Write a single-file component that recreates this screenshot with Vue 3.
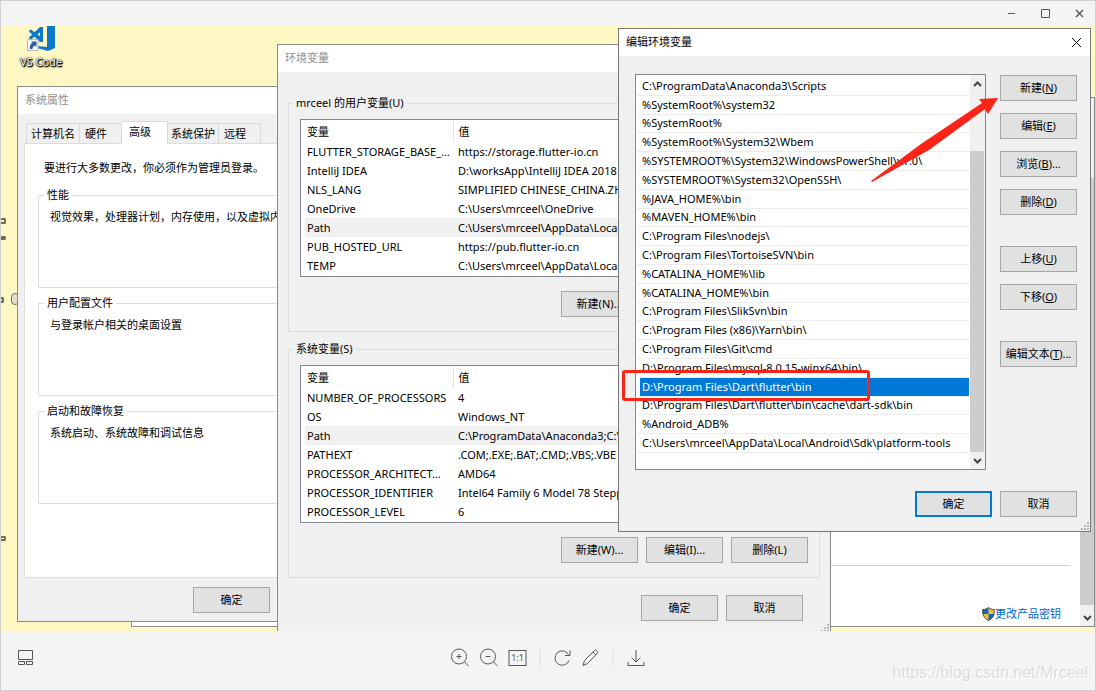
<script setup>
const userVars = [
  ['FLUTTER_STORAGE_BASE_URL', 'https://storage.flutter-io.cn'],
  ['IntelliJ IDEA', 'D:\\worksApp\\IntelliJ IDEA 2018'],
  ['NLS_LANG', 'SIMPLIFIED CHINESE_CHINA.ZHS'],
  ['OneDrive', 'C:\\Users\\mrceel\\OneDrive'],
  ['Path', 'C:\\Users\\mrceel\\AppData\\Local'],
  ['PUB_HOSTED_URL', 'https://pub.flutter-io.cn'],
  ['TEMP', 'C:\\Users\\mrceel\\AppData\\Local'],
]
const systemVars = [
  ['NUMBER_OF_PROCESSORS', '4'],
  ['OS', 'Windows_NT'],
  ['Path', 'C:\\ProgramData\\Anaconda3;C:\\'],
  ['PATHEXT', '.COM;.EXE;.BAT;.CMD;.VBS;.VBE'],
  ['PROCESSOR_ARCHITECT...', 'AMD64'],
  ['PROCESSOR_IDENTIFIER', 'Intel64 Family 6 Model 78 Stepping'],
  ['PROCESSOR_LEVEL', '6'],
]
const groups = [
  { title: 'mrceel 的用户变量(U)', rows: userVars, buttons: ['新建(N)...', '编辑(E)...', '删除(D)'] },
  { title: '系统变量(S)', rows: systemVars, buttons: ['新建(W)...', '编辑(I)...', '删除(L)'] },
]
const paths = [
  'C:\\ProgramData\\Anaconda3\\Scripts',
  '%SystemRoot%\\system32',
  '%SystemRoot%',
  '%SystemRoot%\\System32\\Wbem',
  '%SYSTEMROOT%\\System32\\WindowsPowerShell\\v1.0\\',
  '%SYSTEMROOT%\\System32\\OpenSSH\\',
  '%JAVA_HOME%\\bin',
  '%MAVEN_HOME%\\bin',
  'C:\\Program Files\\nodejs\\',
  'C:\\Program Files\\TortoiseSVN\\bin',
  '%CATALINA_HOME%\\lib',
  '%CATALINA_HOME%\\bin',
  'C:\\Program Files\\SlikSvn\\bin',
  'C:\\Program Files (x86)\\Yarn\\bin\\',
  'C:\\Program Files\\Git\\cmd',
  'D:\\Program Files\\mysql-8.0.15-winx64\\bin\\',
  'D:\\Program Files\\Dart\\flutter\\bin',
  'D:\\Program Files\\Dart\\flutter\\bin\\cache\\dart-sdk\\bin',
  '%Android_ADB%',
  'C:\\Users\\mrceel\\AppData\\Local\\Android\\Sdk\\platform-tools',
]
const selected = 16
const actions = [
  { text: '新建', key: 'N', tail: ')' },
  { text: '编辑', key: 'E', tail: ')' },
  { text: '浏览', key: 'B', tail: ')...' },
  { text: '删除', key: 'D', tail: ')' },
  { text: '上移', key: 'U', tail: ')', gap: true },
  { text: '下移', key: 'O', tail: ')' },
  { text: '编辑文本', key: 'T', tail: ')...', gap: true },
]
const tabs = ['计算机名', '硬件', '高级', '系统保护', '远程']
const sections = [
  { title: '性能', text: '视觉效果，处理器计划，内存使用，以及虚拟内存' },
  { title: '用户配置文件', text: '与登录帐户相关的桌面设置' },
  { title: '启动和故障恢复', text: '系统启动、系统故障和调试信息' },
]
</script>

<template>
  <div class="viewer">
    <header class="viewer-bar">
      <button class="icon-btn" aria-label="最小化">
        <svg width="9" height="9" viewBox="0 0 9 9"><path d="M1 4.500h7" /></svg>
      </button>
      <button class="icon-btn" aria-label="最大化">
        <svg width="9" height="9" viewBox="0 0 9 9"><path d="M.5.5h8v8h-8z" /></svg>
      </button>
      <button class="icon-btn" aria-label="关闭">
        <svg width="9" height="9" viewBox="0 0 9 9"><path d="M1 1l7 7M8 1l-7 7" stroke-width="1.4" /></svg>
      </button>
    </header>

    <main class="desktop">
      <div class="shortcut">
        <svg width="28" height="25" viewBox="0 0 28 25">
          <path d="M20 0h8v22l-7 3-11-3v-2l10 1z" fill="#0a78cc" />
          <path d="M1.500 5L4 3.500 16 12.500V16h-3z" fill="#0a78cc" />
          <path d="M1.500 12L4 13.500 16 4V1h-3z" fill="#0a78cc" />
          <path d="M13 1h3v15h-3z" fill="#0a78cc" />
          <path d="M.5 13.500h10.500v11H.5z" fill="#f5f5f5" stroke="#b9b9b9" />
          <path d="M3 23c-.5-4 1-5.500 2.500-6L4 15.500h5.500V21L8 19.500C6.500 20 5.500 21 5.500 23z" fill="#2c5c9e" />
        </svg>
        <span>VS Code</span>
      </div>
      <i class="scrap s1"></i>
      <i class="scrap s2"></i>
      <i class="scrap s3"></i>
      <i class="scrap s4"></i>
      <i class="scrap s5"></i>

      <section class="window sys-info">
        <div class="info-page">
          <hr />
          <a href="#">
            <svg width="13" height="14" viewBox="0 0 13 14">
              <path d="M6.500.5C5 2 3 2.500.7 2.500c0 5 .8 8.500 5.800 11 5-2.500 5.800-6 5.800-11C10 2.500 8 2 6.500.5z" fill="#f7c02c" />
              <path d="M6.500.5C5 2 3 2.500.7 2.500V7h5.800zM6.500 7v6.500C10.500 11.500 12 9 12.300 7z" fill="#1267c4" />
              <path d="M6.500.5C5 2 3 2.500.7 2.500c0 5 .8 8.500 5.800 11 5-2.500 5.800-6 5.800-11C10 2.500 8 2 6.500.5z" fill="none" stroke="#454545" />
            </svg>更改产品密钥</a>
        </div>
        <div class="page-scroll">
          <span class="page-thumb"></span>
          <svg width="9" height="6" viewBox="0 0 9 6"><path d="M1 1l3.500 3.500L8 1" /></svg>
        </div>
      </section>

      <section class="window props">
        <h2 class="title dim">系统属性</h2>
        <div class="props-body">
          <div class="tabs" role="tablist">
            <button v-for="(t, i) in tabs" :key="t" role="tab" :class="{ on: i === 2 }">{{ t }}</button>
          </div>
          <div class="panel">
            <p>要进行大多数更改，你必须作为管理员登录。</p>
            <fieldset v-for="s in sections" :key="s.title">
              <legend>{{ s.title }}</legend>
              {{ s.text }}
            </fieldset>
          </div>
          <div class="props-foot"><button class="btn">确定</button></div>
        </div>
      </section>

      <section class="window env">
        <h2 class="title dim">环境变量</h2>
        <div class="env-body">
          <fieldset v-for="g in groups" :key="g.title">
            <legend>{{ g.title }}</legend>
            <div class="table-box">
              <table>
                <thead>
                  <tr><th>变量</th><th>值</th></tr>
                </thead>
                <tbody>
                  <tr v-for="r in g.rows" :key="r[0]" :class="{ current: r[0] === 'Path' }">
                    <td>{{ r[0] }}</td>
                    <td>{{ r[1] }}</td>
                  </tr>
                </tbody>
              </table>
            </div>
            <div class="row-buttons">
              <button v-for="b in g.buttons" :key="b" class="btn">{{ b }}</button>
            </div>
          </fieldset>
          <div class="row-buttons env-foot">
            <button class="btn">确定</button>
            <button class="btn">取消</button>
          </div>
        </div>
        <svg class="grip" width="8" height="8" viewBox="0 0 8 8"><path d="M6 0h2v2H6zM6 3h2v2H6zM3 3h2v2H3zM6 6h2v2H6zM3 6h2v2H3zM0 6h2v2H0z" /></svg>
      </section>

      <section class="window edit">
        <header class="edit-head">
          <h2 class="title">编辑环境变量</h2>
          <button class="close" aria-label="关闭">
            <svg width="11" height="11" viewBox="0 0 11 11"><path d="M1 1l9 9M10 1l-9 9" /></svg>
          </button>
        </header>
        <div class="edit-body">
          <div class="list-box">
            <ul>
              <li v-for="(p, i) in paths" :key="p" :class="{ selected: i === selected }">{{ p }}</li>
            </ul>
            <div class="scroll">
              <svg width="9" height="6" viewBox="0 0 9 6"><path d="M1 5l3.500-3.500L8 5" /></svg>
              <span class="thumb"></span>
              <svg width="9" height="6" viewBox="0 0 9 6"><path d="M1 1l3.500 3.500L8 1" /></svg>
            </div>
          </div>
          <div class="actions">
            <button v-for="a in actions" :key="a.text" class="btn" :class="{ apart: a.gap }">{{ a.text }}(<u>{{ a.key }}</u>{{ a.tail }}</button>
          </div>
        </div>
        <footer class="row-buttons edit-foot">
          <button class="btn primary">确定</button>
          <button class="btn">取消</button>
        </footer>
        <svg class="grip" width="8" height="8" viewBox="0 0 8 8"><path d="M6 0h2v2H6zM6 3h2v2H6zM3 3h2v2H3zM6 6h2v2H6zM3 6h2v2H3zM0 6h2v2H0z" /></svg>
      </section>

      <div class="mark-box"></div>
      <svg class="mark-arrow" width="128" height="86" viewBox="0 0 128 86">
        <path d="M1 85L0 84 50 47 111 6 108 2 127 1 117 17 114 12 58 53z" fill="#fb2417" />
      </svg>
    </main>

    <footer class="toolbar">
      <button class="icon-btn" aria-label="缩略图">
        <svg width="16" height="16" viewBox="0 0 16 16"><path d="M.5.5h14v9H.5zM.5 11.500h6v3h-6zM8.500 11.500h6v3h-6z" /></svg>
      </button>
      <div class="tools">
        <button class="icon-btn" aria-label="放大">
          <svg width="19" height="19" viewBox="0 0 19 19"><circle cx="8.500" cy="8.500" r="7.500" /><path d="M14 14l4 4M6 8.500h5M8.500 6v5" /></svg>
        </button>
        <button class="icon-btn" aria-label="缩小">
          <svg width="19" height="19" viewBox="0 0 19 19"><circle cx="8.500" cy="8.500" r="7.500" /><path d="M14 14l4 4M6 8.500h5" /></svg>
        </button>
        <button class="actual">1:1</button>
        <span class="sep"></span>
        <button class="icon-btn" aria-label="旋转">
          <svg width="18" height="18" viewBox="0 0 18 18"><path d="M15.500 11.500A7.200 7.200 0 1 1 15 5.500M16.500 1.500v5h-5" /></svg>
        </button>
        <button class="icon-btn" aria-label="编辑">
          <svg width="18" height="18" viewBox="0 0 18 18"><path d="M1.500 16.500l1.500-5L13 1.500q1-.8 2 0l.8.8q.8 1 0 2L6 14.500z M11.500 3l3 3" /></svg>
        </button>
        <span class="sep"></span>
        <button class="icon-btn" aria-label="下载">
          <svg width="19" height="18" viewBox="0 0 19 18"><path d="M9.500 1v12M5 8.500l4.500 4.500L14 8.500M1.500 13v3.500h16V13" /></svg>
        </button>
      </div>
      <span class="watermark">https://blog.csdn.net/Mrceel</span>
    </footer>
  </div>
</template>

<style>
body {
  margin: 0;
}
</style>

<style scoped>
* {
  box-sizing: border-box;
}
.viewer {
  display: flex;
  flex-direction: column;
  height: 100vh;
  border: 1px solid #cfcfcf;
  background: #f4f4f4;
  color: #000;
  font: 11px/16px "Noto Sans", "Noto Sans CJK SC", sans-serif;
}
button {
  font: inherit;
  color: inherit;
  padding: 0;
  margin: 0;
}
svg {
  display: block;
  fill: none;
  stroke: #555;
}
.shortcut svg,
.info-page svg {
  stroke: none;
}
.icon-btn {
  border: 0;
  background: none;
}
.viewer-bar {
  flex: none;
  display: flex;
  justify-content: flex-end;
  align-items: center;
  gap: 25px;
  height: 25px;
  padding: 0 11px;
}
.desktop {
  position: relative;
  flex: 1;
  min-height: 0;
  overflow: hidden;
  background: #fff7c4;
}
.shortcut {
  position: absolute;
  left: 14px;
  top: 0;
  width: 52px;
  display: flex;
  flex-direction: column;
  align-items: center;
  gap: 3px;
  color: #fff;
  text-shadow: 0 0 1px #000, 1px 1px 1px #000, 1px 1px 2px #000, 0 0 2px #333;
  white-space: nowrap;
}
.scrap {
  position: absolute;
  left: -1px;
  width: 6px;
  height: 6px;
  border: 2px solid #6f6a50;
  border-left: 0;
  border-radius: 2px;
}
.s1 { top: 192px; }
.s2 { top: 210px; height: 4px; }
.s3 { top: 271px; width: 4px; }
.s4 {
  top: 267px;
  left: 10px;
  width: 8px;
  height: 12px;
  border: 1px solid #77735f;
  border-radius: 4px;
  background: #e4e0d0;
}
.s5 { top: 510px; height: 5px; }

.window {
  position: absolute;
  display: flex;
  flex-direction: column;
  border: 1px solid #8b8b86;
  background: #f0f0f0;
  overflow: hidden;
}
.title {
  flex: none;
  height: 27px;
  margin: 0;
  padding: 0 7px;
  background: #fff;
  font-size: 11px;
  font-weight: 400;
  line-height: 26px;
}
.dim {
  color: #8f8f8f;
}
.btn {
  width: 77px;
  height: 26px;
  border: 1px solid #a6a6a6;
  background: #e1e1e1;
  white-space: nowrap;
}
.btn.primary {
  border: 2px solid #0078d7;
}
fieldset {
  min-width: 0;
  margin: 0;
  border: 1px solid #dcdcdc;
}
legend {
  padding: 0 3px;
}
.row-buttons {
  display: flex;
  justify-content: flex-end;
  gap: 8px;
}
.grip {
  position: absolute;
  right: 1px;
  bottom: 1px;
  fill: #b5b5b5;
  stroke: none;
}

.sys-info {
  left: 130px;
  right: 0;
  top: 71px;
  bottom: 4px;
  flex-direction: row;
  background: #fff;
}
.info-page {
  flex: 1;
  display: flex;
  flex-direction: column;
  justify-content: flex-end;
  padding: 0 10px 4px 0;
}
.info-page hr {
  width: 100%;
  margin: 0 0 40px;
  border: 0;
  border-top: 1px solid #cfcfcf;
}
.info-page a {
  display: flex;
  align-self: flex-end;
  align-items: center;
  margin-right: 9px;
  color: #0066cc;
  text-decoration: none;
}
.page-scroll {
  width: 14px;
  display: flex;
  flex-direction: column;
  align-items: center;
  gap: 10px;
  padding: 80px 0 5px;
  background: #f0f0f0;
}
.page-thumb {
  flex: 1;
  width: 100%;
  background: #cdcdcd;
}

.props {
  left: 16px;
  top: 60px;
  width: 380px;
}
.props-body {
  padding: 7px 6px 8px;
}
.tabs {
  display: flex;
  align-items: flex-end;
  padding-left: 2px;
}
.tabs button {
  height: 20px;
  padding: 0 4px;
  border: 1px solid #d9d9d9;
  border-bottom: 0;
  border-left-width: 0;
  background: #f0f0f0;
}
.tabs button:first-child {
  border-left-width: 1px;
}
.tabs button:nth-child(2),
.tabs button:nth-child(5) {
  padding: 0 14px 0 5px;
}
.tabs .on {
  position: relative;
  height: 23px;
  margin-bottom: -1px;
  padding: 0 16px 3px 7px;
  background: #fff;
}
.tabs button:nth-child(4) {
  padding: 0 3px;
}
.panel {
  padding: 16px 13px 73px;
  border: 1px solid #dcdcdc;
  background: #fff;
}
.panel p {
  margin: 0 0 11px 6px;
}
.panel fieldset {
  height: 101px;
  padding: 6px 11px;
  white-space: nowrap;
}
.panel legend {
  margin-left: -6px;
}
.panel fieldset + fieldset {
  margin-top: 7px;
}
.props-foot {
  padding: 9px 0 0 169px;
}

.env {
  left: 276px;
  top: 18px;
  width: 554px;
  height: 590px;
}
.env-body {
  padding: 23px 10px 0;
}
.env fieldset {
  padding: 8px 11px 14px;
}
.env fieldset + fieldset {
  margin-top: 9px;
}
.env legend {
  margin-left: -7px;
}
.table-box {
  margin-bottom: 14px;
  padding: 0 0 1px 4px;
  border: 1px solid #828790;
  background: #fff;
}
table {
  width: 100%;
  table-layout: fixed;
  border-collapse: collapse;
}
th,
td {
  height: 19px;
  padding: 0 2px;
  overflow: hidden;
  font-weight: 400;
  line-height: 19px;
  text-align: left;
  text-overflow: ellipsis;
  white-space: nowrap;
}
th {
  height: 22px;
}
th:first-child {
  width: 148px;
  border-right: 1px solid #e3e3e3;
}
th + th,
td + td {
  padding-left: 5px;
}
.current {
  background: #f0f0f0;
}
.env-foot {
  padding: 17px 17px 0 0;
}

.edit {
  left: 617px;
  top: 2px;
  width: 473px;
  border-color: #777;
}
.edit-head {
  display: flex;
  justify-content: space-between;
  align-items: center;
  background: #fff;
}
.close {
  margin-right: 8px;
  border: 0;
  background: none;
}
.close svg {
  stroke: #111;
}
.edit-body {
  display: flex;
  gap: 14px;
  padding: 18px 13px 0 16px;
}
.list-box {
  flex: 1;
  display: flex;
  min-width: 0;
  height: 396px;
  border: 1px solid #828790;
  background: #fff;
}
ul {
  flex: 1;
  display: grid;
  grid-auto-rows: 1fr;
  height: 378px;
  margin: 0;
  padding: 2px 1px 0;
  list-style: none;
}
li {
  display: flex;
  align-items: center;
  padding-left: 5px;
  border-bottom: 1px solid #ececec;
  white-space: nowrap;
}
.selected {
  margin-left: 3px;
  padding-left: 2px;
  background: #0078d7;
  color: #fff;
}
.scroll {
  width: 15px;
  display: flex;
  flex-direction: column;
  align-items: center;
  padding: 6px 1px 5px 0;
  background: #f0f0f0;
}
.scroll svg,
.page-scroll svg {
  flex: none;
  stroke: #444;
  stroke-width: 2;
}
.thumb {
  flex: 1;
  width: 100%;
  margin: 64px 0 6px;
  background: #cdcdcd;
}
.actions {
  display: flex;
  flex-direction: column;
  gap: 12px;
  padding-top: 1px;
}
.apart {
  margin-top: 19px;
}
.edit-foot {
  padding: 21px 13px 14px;
}

.mark-box {
  position: absolute;
  left: 621px;
  top: 344px;
  width: 248px;
  height: 31px;
  border: 3px solid #fb2417;
  border-radius: 3px;
}
.mark-arrow {
  position: absolute;
  left: 870px;
  top: 71px;
  stroke: none;
}

.toolbar {
  position: relative;
  flex: none;
  display: flex;
  align-items: center;
  height: 59px;
  padding: 0 17px 6px;
}
.tools {
  position: absolute;
  left: 50%;
  transform: translateX(-50%);
  display: flex;
  align-items: center;
  gap: 10px;
}
.actual {
  width: 18px;
  height: 16px;
  border: 1px solid #555;
  background: none;
  color: #555;
  font-size: 9px;
  line-height: 14px;
}
.sep {
  width: 1px;
  height: 16px;
  margin: 0 3px;
  background: #dcdcdc;
}
.watermark {
  position: absolute;
  right: 7px;
  bottom: 7px;
  color: #dcdcdc;
  font: 16px/20px "Liberation Sans", Arial, sans-serif;
  text-shadow: 1px 1px 0 #fff;
}
</style>
